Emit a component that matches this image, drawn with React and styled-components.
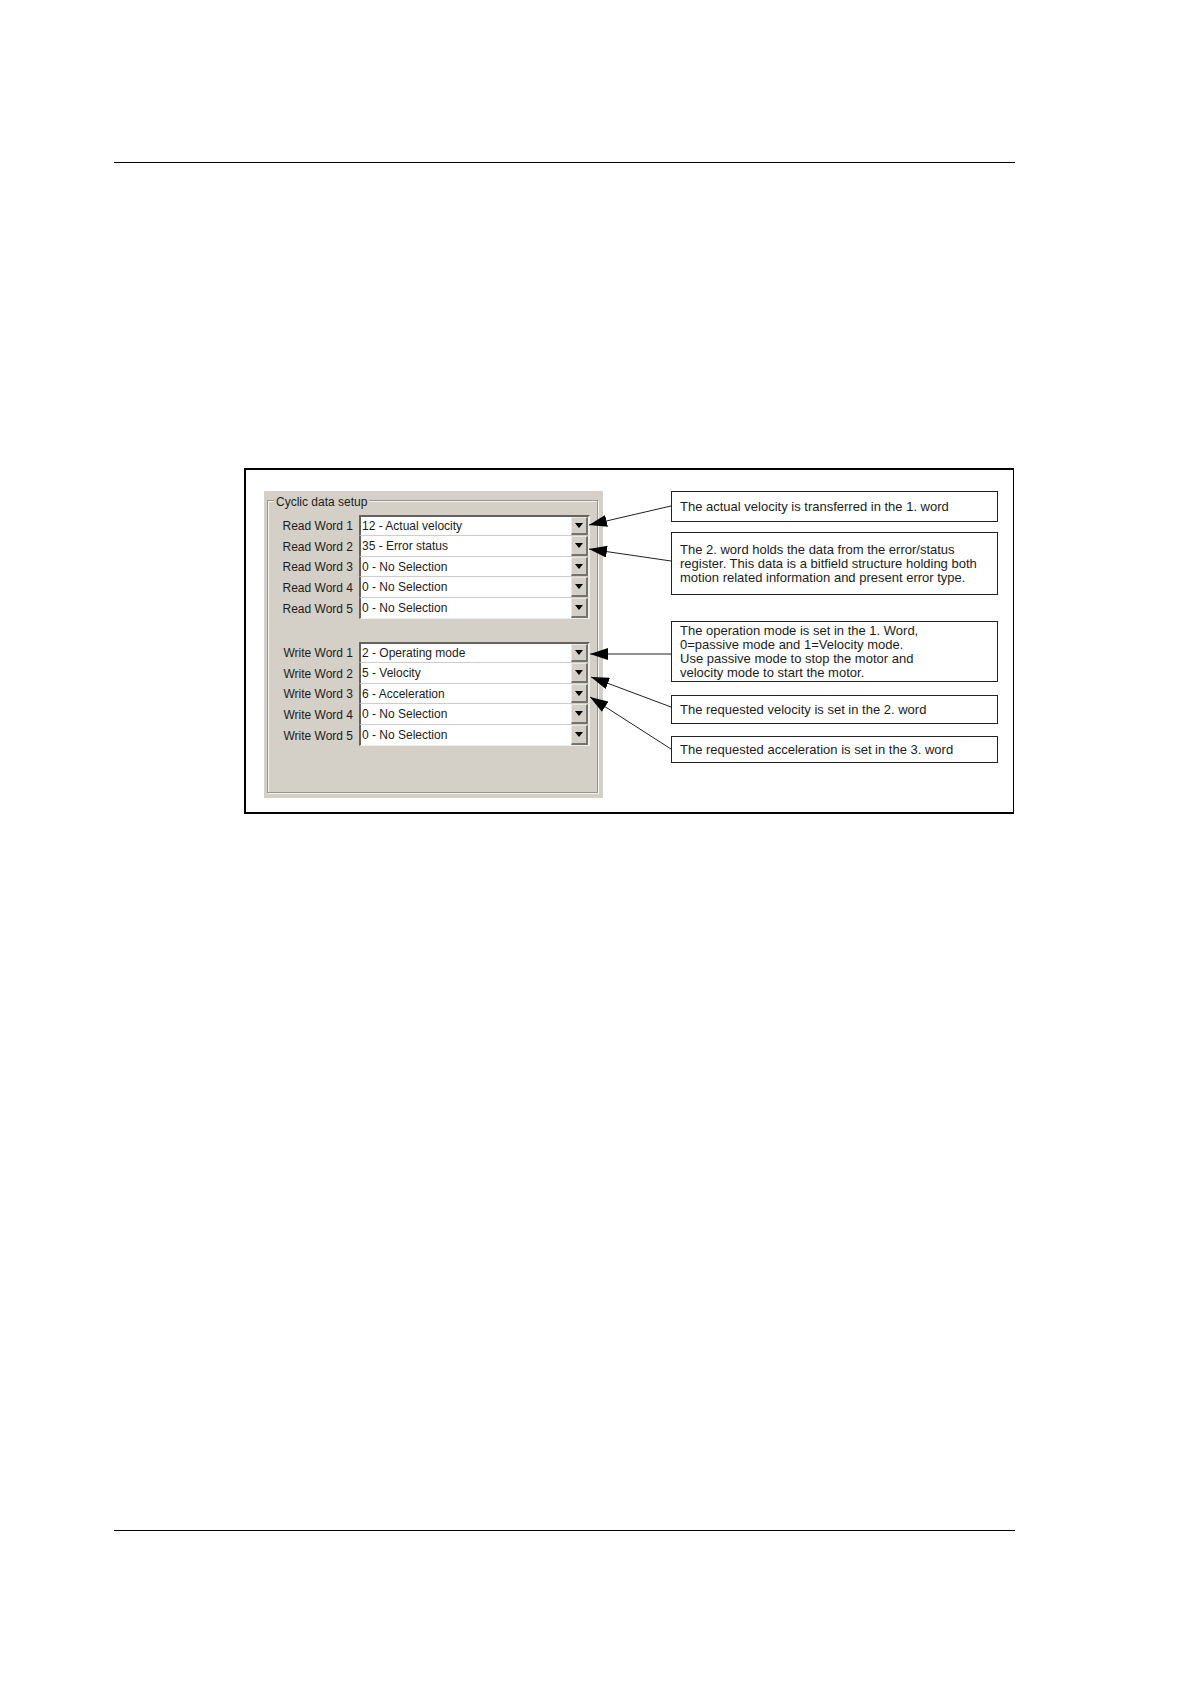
import React from "react";
import styled, { createGlobalStyle } from "styled-components";

const GlobalStyle = createGlobalStyle`
  * {
    box-sizing: border-box;
  }

  body {
    margin: 0;
    background: #fff;
    color: #000;
    font-family: "Liberation Sans", Arial, sans-serif;
  }
`;

const Page = styled.main`
  display: flex;
  flex-direction: column;
  min-height: 100vh;
  padding: 162px 175px 153px 114px;
`;

const Rule = styled.hr`
  width: 100%;
  height: 1px;
  margin: 0;
  border: 0;
  background: #000;
`;

const Figure = styled.figure`
  display: grid;
  grid-template-columns: 339px 1fr;
  column-gap: 68px;
  align-items: start;
  margin: 305px 1px auto 130px;
  padding: 21px 15px 14px 18px;
  border: 2px solid #000;
  border-right-width: 1px;
`;

const Panel = styled.form`
  position: relative;
  padding: 1px 5px 5px 3px;
  background: #d4d0c8;
`;

const Group = styled.fieldset`
  display: flex;
  flex-direction: column;
  gap: 23px;
  min-width: 0;
  margin: 0;
  padding: 6px 7px 46px 6px;
  border: 1px solid #96948e;
  box-shadow: inset 1px 1px #f4f3ef, 1px 1px #f4f3ef;
  color: #1c1c1c;
  font-size: 12px;
`;

const Legend = styled.legend`
  padding: 3px 2px 0;
  background: #d4d0c8;
  line-height: 14px;
`;

const WordList = styled.div`
  display: grid;
  grid-template-rows: 21px 21px 20px 21px 21px;
`;

const WordRow = styled.div`
  display: grid;
  grid-template-columns: 79px 1fr;
  column-gap: 6px;
`;

const Label = styled.label`
  align-self: center;
  text-align: right;
  white-space: nowrap;
`;

const SelectBox = styled.div`
  position: relative;
  display: grid;
  border: solid #f0eeea;
  border-width: ${(props) => (props.$first ? "2px" : "0")} 2px 1px 2px;
  border-top-color: #64625e;
  border-left-color: #64625e;
  border-bottom-color: ${(props) => (props.$last ? "#f0eeea" : "#cfcdc9")};
  background: #fff;
`;

const Select = styled.select`
  width: 100%;
  min-width: 0;
  padding: 0 20px 0 1px;
  border: 0;
  border-radius: 0;
  outline: 0;
  appearance: none;
  background: transparent;
  color: inherit;
  font: inherit;
`;

const DropIcon = styled.span`
  position: absolute;
  top: 0;
  right: 0;
  bottom: 0;
  display: grid;
  place-items: center;
  width: 17px;
  border: solid #75736e;
  border-width: 1px 2px 2px 1px;
  border-top-color: #e9e7e2;
  border-left-color: #e9e7e2;
  background: #d4d0c8;
  pointer-events: none;
`;

const Arrows = styled.svg`
  position: absolute;
  top: 0;
  left: 324px;
  width: 84px;
  height: 307px;
`;

const Notes = styled.div`
  display: flex;
  flex-direction: column;
`;

const Note = styled.p`
  display: flex;
  align-items: center;
  min-height: ${(props) => props.$height}px;
  margin: 0 0 ${(props) => props.$gap}px;
  padding: 0 8px;
  border: 1px solid #222;
  color: #1c1c1c;
  font-size: 13px;
  line-height: 14px;
  white-space: pre-line;
`;

const options = [
  "0 - No Selection",
  "2 - Operating mode",
  "5 - Velocity",
  "6 - Acceleration",
  "12 - Actual velocity",
  "35 - Error status",
];

const readWords = [
  "12 - Actual velocity",
  "35 - Error status",
  "0 - No Selection",
  "0 - No Selection",
  "0 - No Selection",
];

const writeWords = [
  "2 - Operating mode",
  "5 - Velocity",
  "6 - Acceleration",
  "0 - No Selection",
  "0 - No Selection",
];

const notes = [
  { text: "The actual velocity is transferred in the 1. word", height: 31, gap: 10 },
  {
    text: "The 2. word holds the data from the error/status\nregister. This data is a bitfield structure holding both\nmotion related information and present error type.",
    height: 63,
    gap: 26,
  },
  {
    text: "The operation mode is set in the 1. Word,\n0=passive mode and 1=Velocity mode.\nUse passive mode to stop the motor and\nvelocity mode to start the motor.",
    height: 61,
    gap: 13,
  },
  { text: "The requested velocity is set in the 2. word", height: 29, gap: 12 },
  { text: "The requested acceleration is set in the 3. word", height: 27, gap: 0 },
];

// from the note's edge to the drop-down it explains
const arrows = [
  { x: 1, y: 34, fromY: 15 },
  { x: 1, y: 58, fromY: 70 },
  { x: 2, y: 163, fromY: 163 },
  { x: 3, y: 186, fromY: 216 },
  { x: 2, y: 206, fromY: 258 },
];

function Words({ name, values }) {
  return (
    <WordList>
      {values.map((value, i) => {
        const id = `${name.toLowerCase()}-word-${i + 1}`;
        return (
          <WordRow key={id}>
            <Label htmlFor={id}>
              {name} Word {i + 1}
            </Label>
            <SelectBox $first={i === 0} $last={i === values.length - 1}>
              <Select id={id} defaultValue={value}>
                {options.map((option) => (
                  <option key={option}>{option}</option>
                ))}
              </Select>
              <DropIcon>
                <svg width="8" height="5" viewBox="0 0 8 5" aria-hidden="true">
                  <path d="M0 0h8L4 5z" fill="#000" />
                </svg>
              </DropIcon>
            </SelectBox>
          </WordRow>
        );
      })}
    </WordList>
  );
}

function App() {
  return (
    <>
      <GlobalStyle />
      <Page>
        <Rule />
        <Figure>
          <Panel>
            <Group>
              <Legend>Cyclic data setup</Legend>
              <Words name="Read" values={readWords} />
              <Words name="Write" values={writeWords} />
            </Group>
            <Arrows viewBox="0 0 84 307" aria-hidden="true">
              <defs>
                <marker
                  id="tip"
                  markerUnits="userSpaceOnUse"
                  markerWidth="18"
                  markerHeight="12"
                  refX="18"
                  refY="6"
                  orient="auto"
                >
                  <path d="M18 6L0 0v12z" />
                </marker>
              </defs>
              {arrows.map((arrow) => (
                <line
                  key={arrow.y}
                  x1="83"
                  y1={arrow.fromY}
                  x2={arrow.x}
                  y2={arrow.y}
                  stroke="#222"
                  markerEnd="url(#tip)"
                />
              ))}
            </Arrows>
          </Panel>
          <Notes>
            {notes.map((note) => (
              <Note key={note.text} $height={note.height} $gap={note.gap}>
                {note.text}
              </Note>
            ))}
          </Notes>
        </Figure>
        <Rule />
      </Page>
    </>
  );
}

export default App;
